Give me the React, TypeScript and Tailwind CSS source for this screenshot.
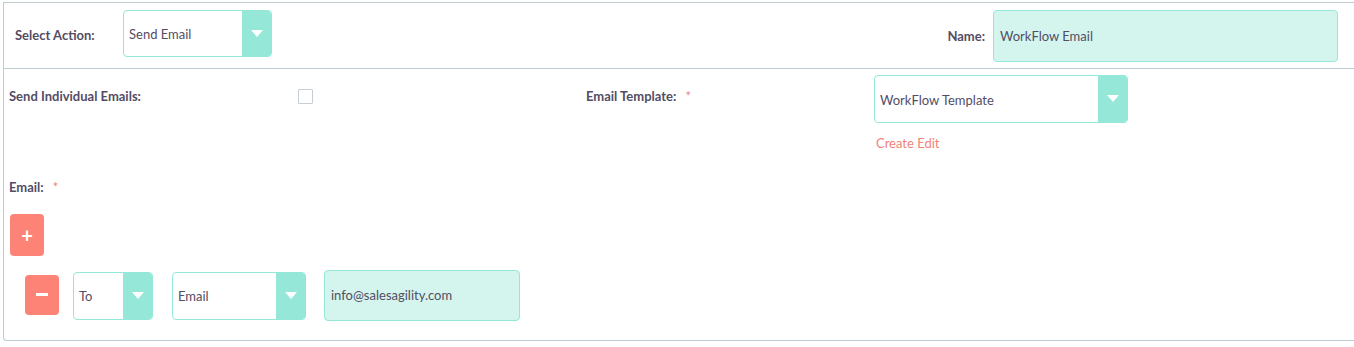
import React from "react";

const label = "text-[13px] font-bold text-[#534d64] leading-[16px]";

function Arrow() {
  return (
    <svg width="12" height="8" viewBox="0 0 12 8" className="block">
      <path d="M0 0 L12 0 L6 7 Z" fill="#ffffff" />
    </svg>
  );
}

function Select({ value, w, arrowW = 29, h = 47 }: { value: string; w: number; arrowW?: number; h?: number }) {
  return (
    <div
      className="flex border border-[#95e8d7] rounded-[4px] overflow-hidden bg-white shrink-0"
      style={{ width: w, height: h }}
    >
      <div className="flex-1 flex items-center pl-[5px] pt-[3px] text-[13px] text-[#534d64]">{value}</div>
      <div className="bg-[#95e8d7] flex items-center justify-center" style={{ width: arrowW }}>
        <Arrow />
      </div>
    </div>
  );
}

export default function App() {
  return (
    <div className="bg-white w-[1354px] h-[347px] pt-[2px] pl-[3px]" style={{ fontFamily: "Lato, 'Open Sans', sans-serif" }}>
      <div className="border-l border-t border-b border-[#bfccd2] rounded-bl-[4px] h-[339px] flex flex-col">
        {/* Action row */}
        <div className="flex items-start h-[66px] border-b border-[#bfccd2] pl-[11px] pr-[16px] pt-[7px]">
          <div className={`${label} w-[108px] mt-[17px]`}>Select Action:</div>
          <Select value="Send Email" w={149} />
          <div className="ml-auto flex items-start gap-[8px]">
            <div className={`${label} mt-[18px]`}>Name:</div>
            <div className="w-[345px] h-[52px] rounded-[4px] border border-[#95e8d7] bg-[#d3f5ee] flex items-center pl-[6px] pt-[1px] text-[13px] text-[#534d64]">
              WorkFlow Email
            </div>
          </div>
        </div>

        {/* Individual emails / template */}
        <div className="flex items-start pt-[6px]">
          <div className={`${label} w-[294px] pl-[5px] mt-[13px]`}>Send Individual Emails:</div>
          <div className="w-[288px] mt-[14px]">
            <div className="w-[15px] h-[15px] border border-[#c6ced3] rounded-[1px] bg-white" />
          </div>
          <div className={`${label} w-[288px] mt-[13px] flex`}>
            <span>Email Template:</span>
            <span className="text-[#f08377] font-normal ml-[9px]">*</span>
          </div>
          <div className="flex flex-col">
            <Select value="WorkFlow Template" w={254} h={48} />
            <div className="mt-[12px] pl-[2px] text-[13px] leading-[16px] text-[#f08377]">Create Edit</div>
          </div>
        </div>

        {/* Email */}
        <div className={`${label} pl-[5px] mt-[28px] flex`}>
          <span>Email:</span>
          <span className="text-[#f08377] font-normal ml-[9px]">*</span>
        </div>
        <div className="pl-[6px] mt-[19px]">
          <div className="w-[34px] h-[42px] rounded-[4px] bg-[#fd8377] flex items-center justify-center text-white text-[20px] font-bold leading-none">
            +
          </div>
        </div>
        <div className="flex items-center pl-[21px] mt-[14px] gap-0">
          <div className="w-[34px] h-[40px] rounded-[4px] bg-[#fd8377] flex items-center justify-center mt-[-2px]">
            <div className="w-[12px] h-[3px] bg-white" />
          </div>
          <div className="ml-[14px]">
            <Select value="To" w={80} h={48} />
          </div>
          <div className="ml-[19px]">
            <Select value="Email" w={134} h={48} />
          </div>
          <div className="ml-[18px] w-[196px] h-[51px] rounded-[4px] border border-[#95e8d7] bg-[#d3f5ee] flex items-center pl-[6px] pt-[1px] text-[13px] text-[#534d64]">
            info@salesagility.com
          </div>
        </div>
      </div>
    </div>
  );
}
